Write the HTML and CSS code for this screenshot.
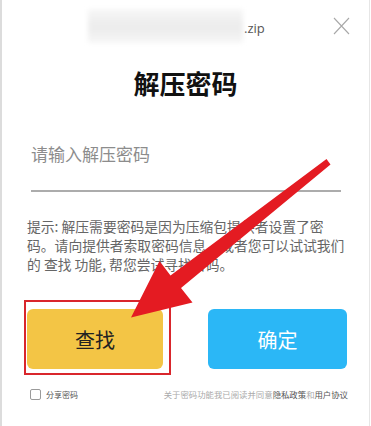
FILE: index.html
```html
<!DOCTYPE html>
<html lang="zh">
<head>
<meta charset="utf-8">
<link rel="stylesheet" href="styles.css">
</head>
<body>
<div class="page">
  <div class="dialog">
    <div class="header">
      <div class="filename">
        <span class="blurred"></span><span class="ext">.zip</span>
      </div>
      <svg class="close" width="17" height="18" viewBox="0 0 17 18"><path d="M1 1 L16 17 M16 1 L1 17" stroke="#a8a8a8" stroke-width="1.1" fill="none"/></svg>
    </div>
    <h1 class="title">解压密码</h1>
    <div class="field">请输入解压密码</div>
    <p class="hint">提示: 解压需要密码是因为压缩包提供者设置了密<br>码。请向提供者索取密码信息，或者您可以试试我们<br>的 查找 功能, 帮您尝试寻找密码。</p>
    <div class="actions">
      <div class="highlight"><button class="btn btn-find">查找</button></div>
      <button class="btn btn-ok">确定</button>
    </div>
    <div class="footer">
      <label class="share"><span class="checkbox"></span>分享密码</label>
      <span class="agree">关于密码功能我已阅读并同意<b>隐私政策</b>和<b>用户协议</b></span>
    </div>
  </div>
  <svg class="arrow" width="371" height="426" viewBox="0 0 371 426">
    <polygon points="326.5,159 330.5,164.5 181,288 192.5,302.5 131,317.5 159.5,261 170.5,275.5" fill="#e41b22"/>
  </svg>
</div>
</body>
</html>
```
FILE: styles.css
```css
html, body {
  margin: 0;
  padding: 0;
  background: #ffffff;
}
body {
  font-family: "Noto Sans CJK SC", "Noto Sans", sans-serif;
}
.page {
  position: relative;
  width: 371px;
  height: 426px;
  overflow: hidden;
}
.dialog {
  box-sizing: border-box;
  width: 370px;
  height: 426px;
  border-left: 2px solid #dcdcdc;
  border-right: 1px solid #e6e6e6;
  background: #fff;
  display: flex;
  flex-direction: column;
}
.header {
  height: 52px;
  display: flex;
  align-items: center;
  padding-left: 86px;
  padding-right: 19px;
}
.filename {
  display: flex;
  align-items: center;
}
.blurred {
  display: block;
  width: 155px;
  height: 34px;
  background: linear-gradient(180deg, #f7f7f7 0%, #eeeeee 40%, #ededed 60%, #f7f7f7 100%);
  filter: blur(2px);
}
.ext {
  margin-left: 1px;
  margin-top: 3px;
  font-family: "Open Sans", "Noto Sans", sans-serif;
  font-size: 13px;
  color: #555;
}
.close {
  margin-left: auto;
  margin-top: -1px;
}
.title {
  margin: 16px 0 0;
  text-align: center;
  font-size: 26px;
  line-height: 30px;
  font-weight: 700;
  color: #111;
}
.field {
  margin: 44px 28px 0 29px;
  padding-bottom: 24px;
  border-bottom: 2px solid #acacac;
  font-size: 17px;
  line-height: 24px;
  color: #8c8c8c;
}
.hint {
  margin: 25px 0 0 25px;
  font-size: 13.8px;
  line-height: 18.8px;
  color: #666;
  white-space: nowrap;
}
.actions {
  margin-top: 27px;
  display: flex;
  align-items: flex-start;
  padding-left: 22px;
}
.highlight {
  border: 2px solid #d9262c;
  padding: 7px 6px 4px 1px;
}
.btn {
  display: block;
  border: none;
  border-radius: 6px;
  height: 60px;
  font-family: "Noto Sans CJK SC", sans-serif;
  font-size: 20px;
  padding: 0;
}
.btn-find {
  width: 136px;
  background: #f3c545;
  color: #222;
}
.btn-ok {
  width: 139px;
  margin-left: 37px;
  margin-top: 9px;
  background: #2bb7f6;
  color: #fff;
}
.footer {
  margin-top: 11px;
  height: 16px;
  display: flex;
  align-items: center;
  padding-left: 28px;
  padding-right: 21px;
}
.share {
  display: flex;
  align-items: center;
  font-size: 8px;
  color: #555;
}
.checkbox {
  display: block;
  width: 9px;
  height: 9px;
  border: 1px solid #9a9a9a;
  border-radius: 2px;
  margin-right: 5px;
}
.agree {
  margin-left: auto;
  font-size: 8.4px;
  color: #aaa;
}
.agree b {
  font-weight: 400;
  color: #555;
}
.arrow {
  position: absolute;
  left: 0;
  top: 0;
  pointer-events: none;
}
```
